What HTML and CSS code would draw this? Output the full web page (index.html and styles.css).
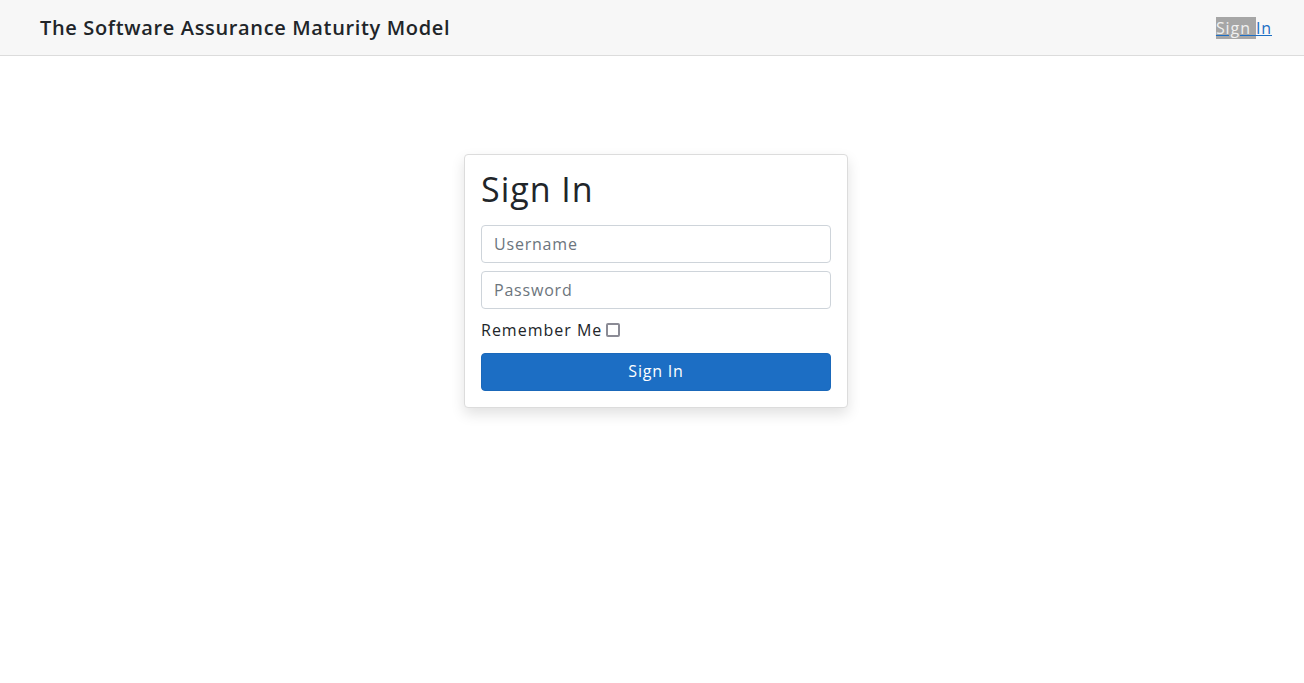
FILE: index.html
```html
<!DOCTYPE html>
<html>
<head>
<meta charset="utf-8">
<link rel="stylesheet" href="styles.css">
</head>
<body>
<header class="navbar">
  <div class="brand">The Software Assurance Maturity Model</div>
  <a class="nav-link" href="#"><span class="sel">Sign </span>In</a>
</header>
<main class="main">
  <form class="card">
    <h1 class="card-title">Sign In</h1>
    <input class="field" type="text" placeholder="Username">
    <input class="field" type="password" placeholder="Password">
    <label class="remember">Remember Me <span class="check"></span></label>
    <button class="btn" type="button">Sign In</button>
  </form>
</main>
</body>
</html>
```
FILE: styles.css
```css
* { box-sizing: border-box; }
html, body { margin: 0; padding: 0; }
body {
  font-family: "Open Sans", "DejaVu Sans", sans-serif;
  color: #212529;
  background: #fff;
  width: 1304px;
  height: 683px;
  letter-spacing: 0.8px;
}
.navbar {
  height: 56px;
  background: #f7f7f7;
  border-bottom: 1px solid #dcdcdc;
  display: flex;
  align-items: center;
  justify-content: space-between;
  padding: 0 32px 0 40px;
}
.brand {
  font-size: 20px;
  font-weight: 600;
  color: #212529;
  letter-spacing: 0.65px;
}
.nav-link {
  font-size: 16px;
  color: #1c6ec4;
  text-decoration: underline;
  letter-spacing: 0.9px;
}
.sel { background: #a6a6a6; color: #f0f0f0; }
.main {
  display: flex;
  justify-content: center;
  padding-top: 98px;
}
.card {
  width: 384px;
  margin-left: 8px;
  border: 1px solid #dcdcdc;
  border-radius: 4px;
  box-shadow: 0 6px 14px rgba(0,0,0,0.12);
  padding: 16px;
  display: flex;
  flex-direction: column;
  background: #fff;
}
.card-title {
  margin: 0 0 14px;
  font-size: 34px;
  font-weight: 400;
  line-height: 36px;
  padding-bottom: 4px;
  letter-spacing: 1px;
}
.field {
  height: 38px;
  border: 1px solid #ced4da;
  border-radius: 4px;
  padding: 0 12px;
  font-family: inherit;
  font-size: 16px;
  letter-spacing: 0.8px;
  margin-bottom: 8px;
  color: #495057;
}
.field::placeholder { color: #6c757d; }
.remember {
  font-size: 16px;
  line-height: 24px;
  display: flex;
  align-items: center;
  gap: 4px;
  margin: 1px 0 11px;
  letter-spacing: 1px;
}
.check {
  width: 14px;
  height: 14px;
  border: 2px solid #8b8b95;
  border-radius: 2px;
  display: inline-block;
}
.btn {
  height: 38px;
  background: #1c6ec4;
  border: 1px solid #1a68ba;
  border-radius: 4px;
  color: #fff;
  font-family: inherit;
  font-size: 16px;
  letter-spacing: 0.8px;
  padding-bottom: 3px;
}
```
